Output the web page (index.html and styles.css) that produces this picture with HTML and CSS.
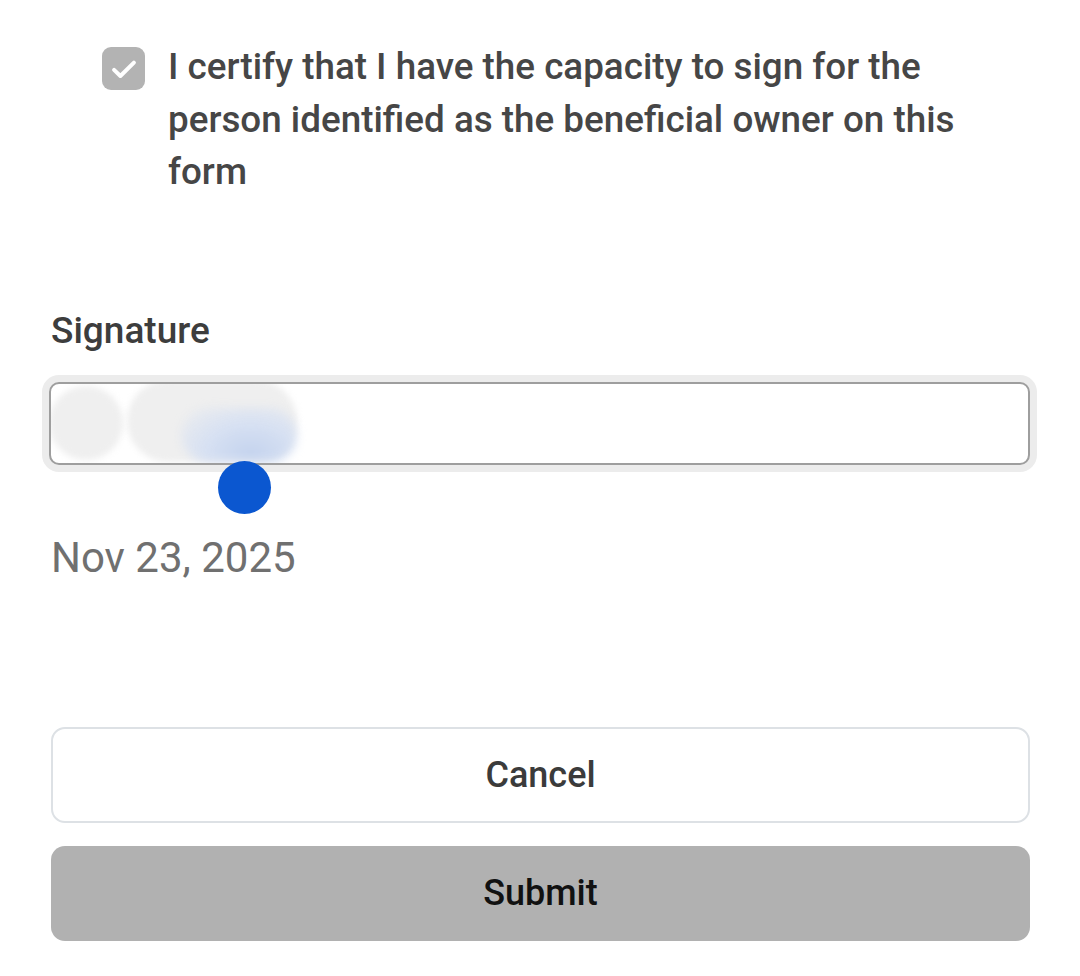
FILE: index.html
```html
<!DOCTYPE html>
<html>
<head>
<meta charset="utf-8">
<link rel="stylesheet" href="styles.css">
</head>
<body>
<div class="page">
  <div class="certify">
    <div class="checkbox">
      <svg viewBox="0 0 24 24" width="28" height="28"><path d="M3.5 12.8l5.4 5.2L20.5 6.5" fill="none" stroke="#fff" stroke-width="3.4" stroke-linecap="round" stroke-linejoin="round"/></svg>
    </div>
    <p class="certify-text">I certify that I have the capacity to sign for the person identified as the beneficial owner on this form</p>
  </div>

  <div class="field">
    <label class="label">Signature</label>
    <div class="input-ring">
      <div class="input">
        <span class="blob blob-a"></span>
        <span class="blob blob-b"></span>
        <span class="blob blob-c"></span>
      </div>
      <span class="handle"></span>
    </div>
  </div>

  <div class="date">Nov 23, 2025</div>

  <div class="actions">
    <button class="btn btn-cancel">Cancel</button>
    <button class="btn btn-submit">Submit</button>
  </div>
</div>
</body>
</html>
```
FILE: styles.css
```css
html, body {
  margin: 0;
  padding: 0;
  background: #ffffff;
}
body {
  font-family: Roboto, "Noto Sans", "Liberation Sans", sans-serif;
  width: 1080px;
  height: 976px;
  overflow: hidden;
}
.page {
  padding: 0 50px 0 51px;
  display: flex;
  flex-direction: column;
}
.certify {
  display: flex;
  align-items: flex-start;
  gap: 23px;
  padding-left: 51px;
  margin-top: 41px;
}
.checkbox {
  flex: none;
  width: 43px;
  height: 43px;
  margin-top: 6px;
  border-radius: 9px;
  background: #b3b3b3;
  display: flex;
  align-items: center;
  justify-content: center;
}
.certify-text {
  margin: 0;
  font-size: 36.8px;
  font-weight: 500;
  line-height: 52.5px;
  color: #464646;
  width: 820px;
}
.field {
  margin-top: 110px;
  display: flex;
  flex-direction: column;
}
.label {
  font-size: 37px;
  font-weight: 500;
  color: #3d3d3d;
  line-height: 44px;
}
.input-ring {
  position: relative;
  margin: 22px 0 0 -9px;
  width: 981px;
  padding: 7px;
  border-radius: 17px;
  background: #ececec;
}
.input {
  position: relative;
  height: 79px;
  border: 2px solid #9e9e9e;
  border-radius: 10px;
  background: #fff;
  overflow: hidden;
}
.blob {
  position: absolute;
  filter: blur(3px);
}
.blob-a {
  left: -2px;
  top: 2px;
  width: 74px;
  height: 74px;
  border-radius: 50%;
  background: #efefef;
}
.blob-b {
  left: 76px;
  top: -4px;
  width: 170px;
  height: 82px;
  border-radius: 41px;
  background: #efefef;
}
.blob-c {
  left: 130px;
  top: 24px;
  width: 116px;
  height: 54px;
  border-radius: 30px;
  background: radial-gradient(ellipse at 60% 85%, #c4d3ee 0%, #d6e0f2 45%, rgba(239,239,239,0) 100%);
  filter: blur(5px);
}
.handle {
  position: absolute;
  left: 176px;
  top: 86px;
  width: 53px;
  height: 53px;
  background: #0b57d0;
  border-radius: 50%;
}
.date {
  margin-top: 62px;
  font-size: 42px;
  font-weight: 400;
  color: #707070;
  line-height: 48px;
}
.actions {
  margin-top: 145px;
  display: flex;
  flex-direction: column;
  gap: 23px;
}
.btn {
  font-family: inherit;
  width: 979px;
  height: 96px;
  border-radius: 14px;
  font-size: 36px;
  font-weight: 500;
  cursor: pointer;
}
.btn-cancel {
  background: #ffffff;
  border: 2px solid #dde1e5;
  color: #3b3b3b;
}
.btn-submit {
  background: #b1b1b1;
  border: none;
  color: #111111;
  height: 95px;
}
```
